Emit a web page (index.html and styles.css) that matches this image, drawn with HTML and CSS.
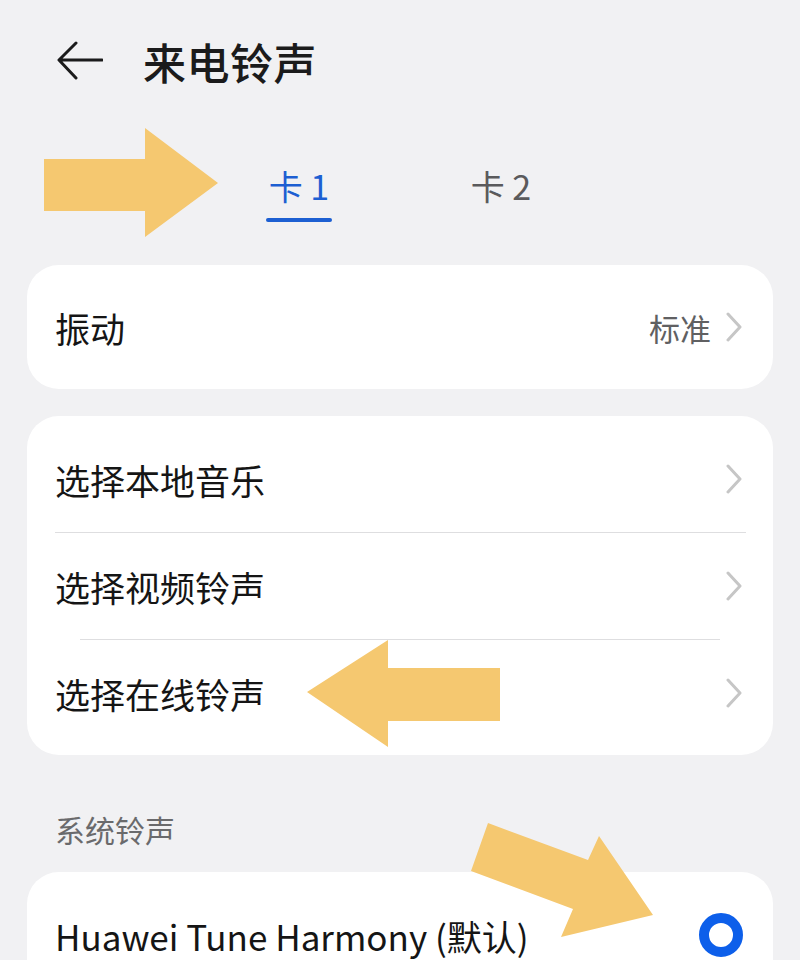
FILE: index.html
```html
<!DOCTYPE html>
<html lang="zh-CN">
<head>
<meta charset="utf-8">
<title>来电铃声</title>
<link rel="stylesheet" href="styles.css">
</head>
<body>
<div class="page">
  <header class="header">
    <svg class="back" width="46" height="40" viewBox="0 0 46 40">
      <path d="M45 19H3M19 2L2 19L19 37" fill="none" stroke="#1b1b1b" stroke-width="3" stroke-linecap="round" stroke-linejoin="round"/>
    </svg>
    <h1 class="title">来电铃声</h1>
  </header>

  <nav class="tabs">
    <div class="tab tab-active"><span class="tab-label">卡 1</span><span class="tab-bar"></span></div>
    <div class="tab"><span class="tab-label">卡 2</span><span class="tab-bar"></span></div>
  </nav>

  <section class="card card-single">
    <div class="row">
      <span class="row-label">振动</span>
      <span class="row-right"><span class="row-value">标准</span>
        <svg class="chev" width="16" height="30" viewBox="0 0 16 30"><path d="M2 2L14 15L2 28" fill="none" stroke="#c6c6c6" stroke-width="3" stroke-linecap="round" stroke-linejoin="round"/></svg>
      </span>
    </div>
  </section>

  <section class="card card-list">
    <div class="row row-list">
      <span class="row-label">选择本地音乐</span>
      <svg class="chev" width="16" height="30" viewBox="0 0 16 30"><path d="M2 2L14 15L2 28" fill="none" stroke="#c6c6c6" stroke-width="3" stroke-linecap="round" stroke-linejoin="round"/></svg>
    </div>
    <div class="divider"></div>
    <div class="row row-list">
      <span class="row-label">选择视频铃声</span>
      <svg class="chev" width="16" height="30" viewBox="0 0 16 30"><path d="M2 2L14 15L2 28" fill="none" stroke="#c6c6c6" stroke-width="3" stroke-linecap="round" stroke-linejoin="round"/></svg>
    </div>
    <div class="divider divider-short"></div>
    <div class="row row-list">
      <span class="row-label">选择在线铃声</span>
      <svg class="chev" width="16" height="30" viewBox="0 0 16 30"><path d="M2 2L14 15L2 28" fill="none" stroke="#c6c6c6" stroke-width="3" stroke-linecap="round" stroke-linejoin="round"/></svg>
    </div>
  </section>

  <div class="section-label">系统铃声</div>

  <section class="card card-system">
    <div class="row row-system">
      <span class="row-label">Huawei Tune Harmony (默认)</span>
      <span class="radio"></span>
    </div>
  </section>

  <svg class="arrows" width="800" height="960" viewBox="0 0 800 960">
    <polygon points="44,159 145,159 145,128 218,183 145,237 145,211 44,211" fill="#f5c870"/>
    <polygon points="500,668 388,668 388,640 307,692 388,747 388,721 500,721" fill="#f5c870"/>
    <polygon points="488,823 588,860 599,836 653,915 561,937 573,909 471,871" fill="#f5c870"/>
  </svg>
</div>
</body>
</html>
```
FILE: styles.css
```css
* { box-sizing: border-box; margin: 0; padding: 0; }
html, body { background: #f1f1f3; }
body {
  font-family: "Noto Sans CJK SC", "Noto Sans", sans-serif;
  color: #1b1b1b;
  width: 800px;
  height: 960px;
  overflow: hidden;
}
.page {
  position: relative;
  width: 800px;
  height: 960px;
  padding: 0 27px;
  overflow: hidden;
}
.header {
  height: 122px;
  display: flex;
  align-items: center;
  padding-left: 30px;
}
.back { display: block; flex: none; }
.title {
  margin-left: 40px;
  font-size: 43px;
  font-weight: 500;
  letter-spacing: 0.5px;
  line-height: 1;
}
.tabs {
  height: 143px;
  display: flex;
  justify-content: center;
  gap: 136px;
  padding-top: 44px;
}
.tab {
  display: flex;
  flex-direction: column;
  align-items: center;
  width: 66px;
}
.tab-label {
  font-size: 34px;
  line-height: 40px;
  color: #5a5a5c;
  white-space: nowrap;
}
.tab-bar {
  width: 66px;
  height: 4px;
  border-radius: 2px;
  margin-top: 12px;
  background: transparent;
}
.tab-active .tab-label { color: #1d5fd2; }
.tab-active .tab-bar { background: #1d5fd2; }

.card {
  background: #ffffff;
  border-radius: 32px;
}
.card-single { height: 124px; }
.card-list { margin-top: 27px; padding: 10px 0 9px; }
.card-system {
  margin-top: 24px;
  height: 88px;
  overflow: hidden;
  border-radius: 32px 32px 0 0;
}
.row {
  height: 124px;
  display: flex;
  align-items: center;
  justify-content: space-between;
  padding: 0 31px 0 28px;
}
.row-list { height: 106px; }
.row-system { height: 126px; padding-right: 30px; }
.row-label {
  font-size: 35px;
  line-height: 1;
  color: #151515;
}
.row-right { display: flex; align-items: center; gap: 15px; }
.row-value { font-size: 31px; color: #606062; line-height: 1; }
.chev { display: block; flex: none; }
.divider {
  height: 1px;
  background: #dedee0;
  margin: 0 27px 0 28px;
}
.divider-short { margin: 0 53px 0 53px; }
.section-label {
  height: 93px;
  padding: 56px 0 0 28px;
  font-size: 30px;
  line-height: 37px;
  color: #6a6a6c;
}
.radio {
  width: 44px;
  height: 44px;
  border-radius: 50%;
  border: 10px solid #0d5fea;
  flex: none;
}
.arrows {
  position: absolute;
  left: 0;
  top: 0;
  pointer-events: none;
}
```
